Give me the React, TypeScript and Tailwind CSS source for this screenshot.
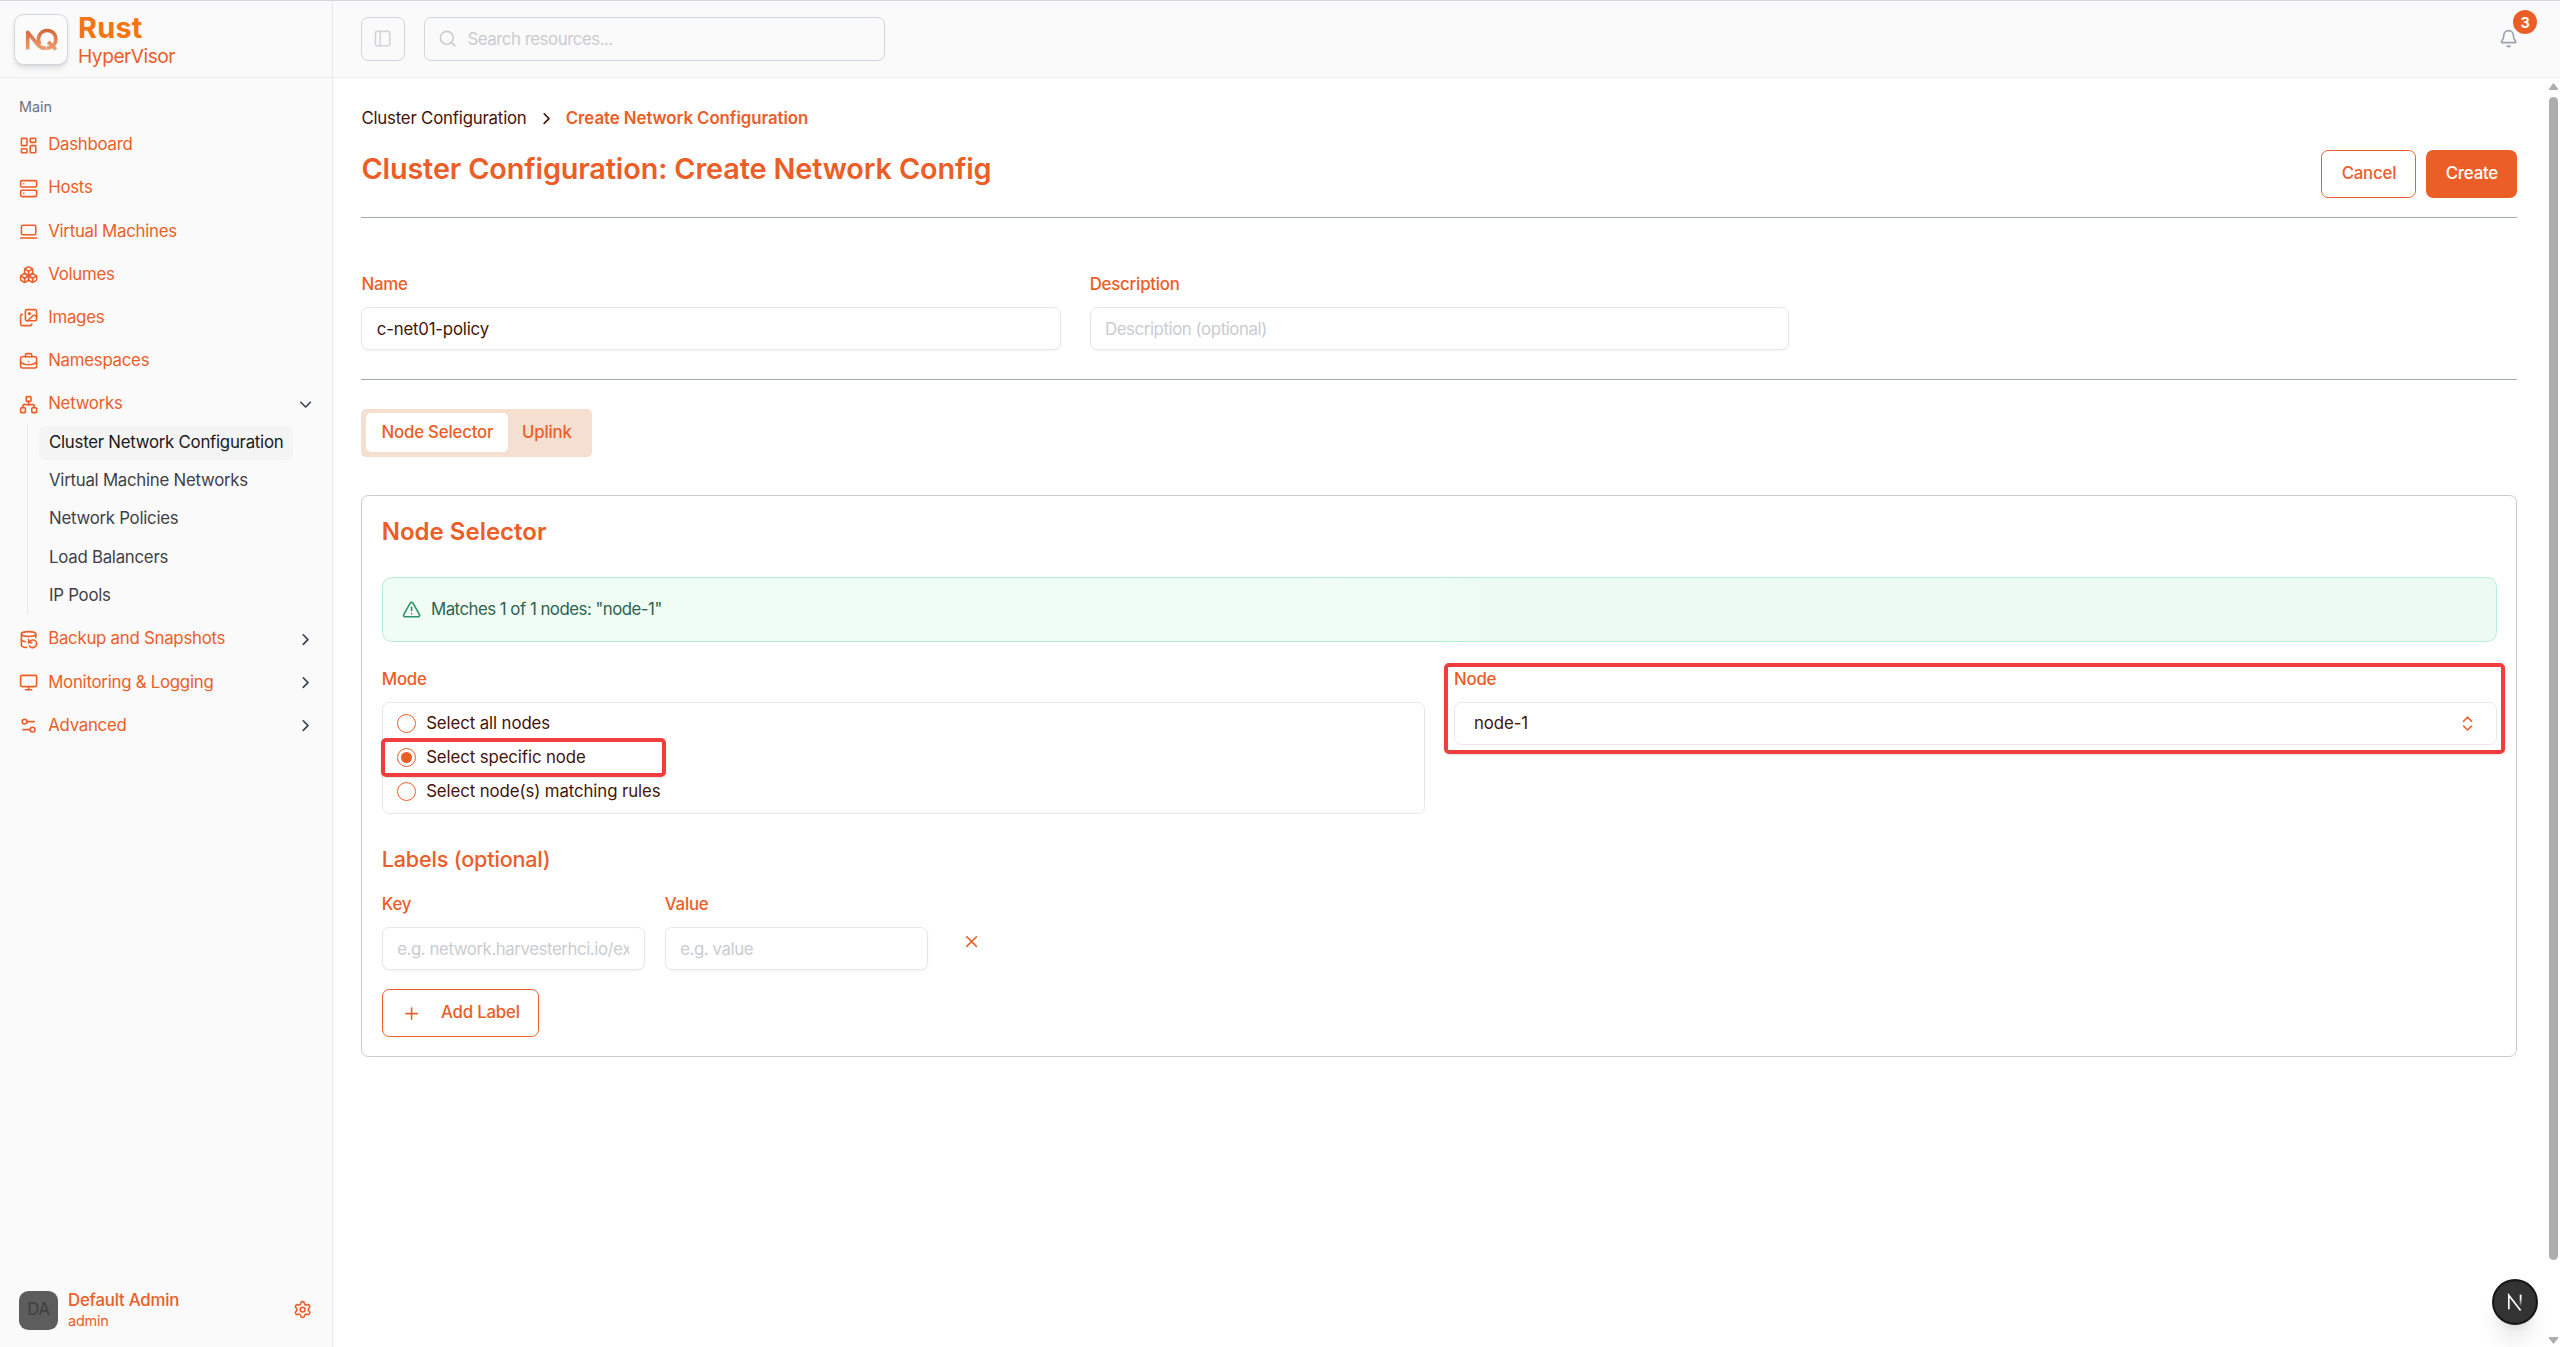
import type { ReactNode } from "react";
import {
  Bell,
  Boxes,
  BriefcaseBusiness,
  ChevronDown,
  ChevronRight,
  ChevronsUpDown,
  DatabaseBackup,
  Images,
  LaptopMinimal,
  LayoutDashboard,
  Monitor,
  Network,
  PanelLeft,
  Plus,
  Search,
  Server,
  Settings,
  Settings2,
  TriangleAlert,
  X,
} from "lucide-react";

const mainItems = [
  { title: "Dashboard", icon: LayoutDashboard },
  { title: "Hosts", icon: Server },
  { title: "Virtual Machines", icon: LaptopMinimal },
  { title: "Volumes", icon: Boxes },
  { title: "Images", icon: Images },
  { title: "Namespaces", icon: BriefcaseBusiness },
];

const networkItems = [
  "Cluster Network Configuration",
  "Virtual Machine Networks",
  "Network Policies",
  "Load Balancers",
  "IP Pools",
];

const groupItems = [
  { title: "Backup and Snapshots", icon: DatabaseBackup },
  { title: "Monitoring & Logging", icon: Monitor },
  { title: "Advanced", icon: Settings2 },
];

const modes = [
  "Select all nodes",
  "Select specific node",
  "Select node(s) matching rules",
];

function Logo() {
  return (
    <svg viewBox="0 0 34 24" className="h-[23px] w-[33px]" fill="none">
      <defs>
        <linearGradient id="logo" x1="0" y1="0" x2="0" y2="24" gradientUnits="userSpaceOnUse">
          <stop offset="0" stopColor="#cf6236" />
          <stop offset="1" stopColor="#f0a277" />
        </linearGradient>
      </defs>
      <g stroke="url(#logo)" strokeWidth="3.8">
        <path d="M2.6 22.5V4.6L14 18.3C16 20.6 19 21.4 22 21" strokeLinejoin="round" />
        <path d="M15.6 17C11.5 10.5 15.5 2.6 23 2.6C28.500 2.600 32 6.800 32 11.700C32 17 28 21 22.500 21" />
        <path d="M24 14.500L32 22.500" />
      </g>
    </svg>
  );
}

function Sidebar() {
  return (
    <aside className="flex w-[333px] shrink-0 flex-col border-r border-[#e8e8ea] bg-[#fafafa] text-[#eb5e28]">
      <div className="flex h-[77px] shrink-0 items-center gap-[10px] border-b border-[#ededef] pl-[14px]">
        <div className="flex h-[51px] w-[54px] items-center justify-center rounded-lg border border-gray-300 bg-[#fbfbfc] shadow-md">
          <Logo />
        </div>
        <div className="flex flex-col pt-px">
          <span className="text-2xl leading-7 font-bold tracking-[0.3px] text-[#f5750f]">Rust</span>
          <span className="text-base leading-5 tracking-[-0.5px]">HyperVisor</span>
        </div>
      </div>

      <div className="flex flex-1 flex-col px-[19px] pt-[9px]">
        <div className="flex h-[39px] items-center text-xs tracking-normal text-gray-500">Main</div>
        <nav className="flex flex-col gap-1 text-sm tracking-[-0.25px]">
          {mainItems.map((item) => (
            <a key={item.title} className="flex h-8 items-center gap-[10px]">
              <item.icon className="size-4" />
              <span>{item.title}</span>
            </a>
          ))}
          <div>
            <a className="flex h-8 items-center gap-[10px]">
              <Network className="size-4" />
              <span>Networks</span>
              <ChevronDown className="-mr-[2px] ml-auto size-4 text-gray-700" />
            </a>
            <div className="ml-[8px] flex flex-col gap-1 border-l border-gray-200 py-0.5 pr-[20px] pl-[11px]">
              {networkItems.map((title, i) => (
                <a
                  key={title}
                  className={
                    i === 0
                      ? "flex h-7 items-center rounded-md bg-[#f4f4f5] px-[10px] whitespace-nowrap text-zinc-900"
                      : "flex h-7 items-center px-[10px] whitespace-nowrap text-zinc-700"
                  }
                >
                  {title}
                </a>
              ))}
            </div>
          </div>
          {groupItems.map((item) => (
            <a key={item.title} className="flex h-8 items-center gap-[10px]">
              <item.icon className="size-4" />
              <span>{item.title}</span>
              <ChevronRight className="-mr-[2px] ml-auto size-4 text-gray-700" />
            </a>
          ))}
        </nav>
      </div>

      <div className="flex items-center pr-[20px] pb-[17px] pl-[19px]">
        <div className="flex size-[39px] items-center justify-center rounded-lg bg-[#5d5d5d] text-sm text-[#3f3f3f]">
          DA
        </div>
        <div className="ml-[10px] flex flex-col">
          <span className="text-sm leading-[21px] font-medium">Default Admin</span>
          <span className="text-xs leading-[19px]">admin</span>
        </div>
        <Settings className="ml-auto size-4" />
      </div>
    </aside>
  );
}

function TopBar() {
  return (
    <header className="flex h-[77px] shrink-0 items-center gap-4 border-b border-[#ededef] bg-[#fafafa] pr-[30px] pl-[28px]">
      <button className="flex h-9 w-[44px] items-center justify-center rounded-md border border-gray-300 text-gray-300">
        <PanelLeft className="size-4" />
      </button>
      <div className="flex h-9 w-96 items-center gap-[10px] rounded-md border border-gray-300 px-[13px] text-[#c9ccd1]">
        <Search className="size-4" />
        <span className="pt-px text-sm tracking-[-0.45px]">Search resources...</span>
      </div>
      <button className="relative ml-auto flex size-9 items-center justify-center text-gray-400">
        <Bell className="size-4" />
        <span className="absolute -top-[7px] -right-[7px] flex size-5 items-center justify-center rounded-full bg-[#eb5e28] text-xs font-bold text-white">
          3
        </span>
      </button>
    </header>
  );
}

function Field({ label, children }: { label: string; children: ReactNode }) {
  return (
    <div className="flex flex-col gap-[11px]">
      <label className="text-sm leading-[23px] font-medium text-[#eb5e28]">{label}</label>
      {children}
    </div>
  );
}

const inputClass =
  "h-9 w-full rounded-md border border-gray-200 bg-white px-3 text-sm tracking-[-0.2px] text-[#441306] shadow-xs placeholder:tracking-[-0.42px] placeholder:text-[#c9ccd1] outline-none";

function NodeSelector() {
  return (
    <section className="mt-8 rounded-md border border-[#c9cbd3] pt-[19px] pr-[19px] pb-4 pl-[19.4px]">
      <h2 className="text-xl font-semibold tracking-normal">Node Selector</h2>

      <div className="mt-[28px] flex h-[65px] items-center gap-[10px] rounded-lg border border-[#b5f0d3] bg-linear-to-r from-[#f0fdf4] from-50% to-[#edfaf4] to-52% px-[19px] text-sm text-[#2c6350]">
        <TriangleAlert className="size-4 text-[#2f9468]" />
        <span className="pt-px tracking-[-0.5px]">Matches 1 of 1 nodes: "node-1"</span>
      </div>

      <div className="mt-[26px] grid grid-cols-2 items-start gap-6">
        <Field label="Mode">
          <div className="relative flex h-[112px] flex-col justify-center gap-[15px] rounded-md border border-gray-200 px-3">
            {modes.map((mode, i) => (
              <div key={mode} className="flex h-[19px] items-center gap-[10px]">
                <span className="flex size-[19px] items-center justify-center rounded-full border border-[#eb5e28]">
                  {i === 1 && <span className="size-[11px] rounded-full bg-[#eb5e28]" />}
                </span>
                <span className="text-sm tracking-[-0.1px] text-[#441306]">{mode}</span>
              </div>
            ))}
            <div className="absolute top-[35px] -left-[2px] h-[39px] w-[285px] rounded-[5px] border-4 border-[#f03e3e] shadow-sm" />
          </div>
        </Field>
        <div className="relative">
          <Field label="Node">
            <div className="flex h-9 items-center justify-between rounded-md border border-gray-200 pr-[19px] pl-[19px] text-sm tracking-[-0.1px] text-[#441306]">
              node-1
              <ChevronsUpDown className="size-4 text-[#eb5e28]" />
            </div>
          </Field>
          <div className="absolute -top-[5px] -left-[10px] h-[91px] w-[1061px] rounded-[5px] border-4 border-[#f03e3e] shadow-sm" />
        </div>
      </div>

      <h3 className="mt-[29px] text-lg leading-[33px] font-medium">Labels (optional)</h3>
      <div className="mt-[17px] flex gap-[20px]">
        <div className="w-[263px]">
          <Field label="Key">
            <input className={inputClass} placeholder="e.g. network.harvesterhci.io/ex" />
          </Field>
        </div>
        <div className="w-[263px]">
          <Field label="Value">
            <input className={inputClass} placeholder="e.g. value" />
          </Field>
        </div>
        <button className="mt-[25px] flex size-10 items-center justify-center">
          <X className="size-4" />
        </button>
      </div>
      <button className="mt-[19px] flex h-10 w-[157px] items-center rounded-md border border-[#eb5e28] pl-[19px] text-sm font-medium">
        <Plus className="size-4" />
        <span className="ml-[20px]">Add Label</span>
      </button>
    </section>
  );
}

function ScrollBar() {
  return (
    <div className="flex w-[14px] shrink-0 flex-col items-center bg-white pt-[5px] pb-[3px]">
      <svg viewBox="0 0 9 7" className="h-[7px] w-[9px]" fill="#adadad">
        <path d="M4.500 0L9 5.800V7H0V5.800Z" />
      </svg>
      <div className="mt-1.5 h-[1163px] w-[9px] rounded-full bg-[#adadad]" />
      <svg viewBox="0 0 9 7" className="mt-auto h-[7px] w-[9px]" fill="#adadad">
        <path d="M4.500 7L9 1.200V0H0V1.200Z" />
      </svg>
    </div>
  );
}

export default function App() {
  return (
    <div className="flex h-screen overflow-hidden border-t border-[#d5d5dc] bg-white font-['Inter','Liberation_Sans',sans-serif] tracking-[-0.2px]">
      {/* rem is 20% larger than the browser default */}
      <style>{`html { font-size: 19.2px; }`}</style>
      <Sidebar />
      <div className="flex min-w-0 flex-1 flex-col">
        <TopBar />
        <div className="flex min-h-0 flex-1">
          <main className="flex-1 py-6 pr-[28.6px] pl-[28.4px] text-[#eb5e28]">
            <div className="flex items-center gap-[10px] text-sm">
              <span className="text-[#441306]">Cluster Configuration</span>
              <ChevronRight className="size-4 text-[#441306]" />
              <span className="font-semibold tracking-[-0.05px]">Create Network Configuration</span>
            </div>

            <div className="mt-4 flex items-start justify-between border-b border-[#a3aab5] pb-4">
              <h1 className="text-2xl font-semibold tracking-[-0.12px]">
                Cluster Configuration: Create Network Config
              </h1>
              <div className="flex gap-[10px] text-sm font-medium">
                <button className="h-10 w-[95px] rounded-md border border-[#eb5e28]">Cancel</button>
                <button className="h-10 w-[91px] rounded-md bg-[#eb5e28] text-white">Create</button>
              </div>
            </div>

            <div className="grid grid-cols-3 gap-6 border-b border-[#a3aab5] pt-[55px] pb-6">
              <Field label="Name">
                <input className={inputClass} defaultValue="c-net01-policy" />
              </Field>
              <Field label="Description">
                <input className={inputClass} placeholder="Description (optional)" />
              </Field>
            </div>

            <div className="mt-6 flex h-10 w-[231px] items-center rounded-[5px] bg-[#f4dfd1] px-[5px] pb-px text-sm font-medium">
              <button className="h-[39px] w-[142px] rounded-[5px] bg-white pt-[2px]">Node Selector</button>
              <button className="h-[39px] w-[77px] pt-[2px]">Uplink</button>
            </div>

            <NodeSelector />
          </main>
          <ScrollBar />
        </div>
      </div>

      <div className="fixed right-[22px] bottom-[22px] flex size-[46px] items-center justify-center rounded-full border-2 border-[#161616] bg-[#333] shadow-xl">
        <svg viewBox="0 0 16 16" className="size-[18px]" fill="none">
          <defs>
            <linearGradient id="fade" x1="0" y1="0" x2="0" y2="16" gradientUnits="userSpaceOnUse">
              <stop offset="0.3" stopColor="#fff" />
              <stop offset="0.75" stopColor="#fff" stopOpacity="0" />
            </linearGradient>
          </defs>
          <path d="M2.500 14.500V2L13 15.500" stroke="#fff" strokeWidth="1.500" />
          <path d="M13 1.500V12" stroke="url(#fade)" strokeWidth="1.600" />
        </svg>
      </div>
    </div>
  );
}
